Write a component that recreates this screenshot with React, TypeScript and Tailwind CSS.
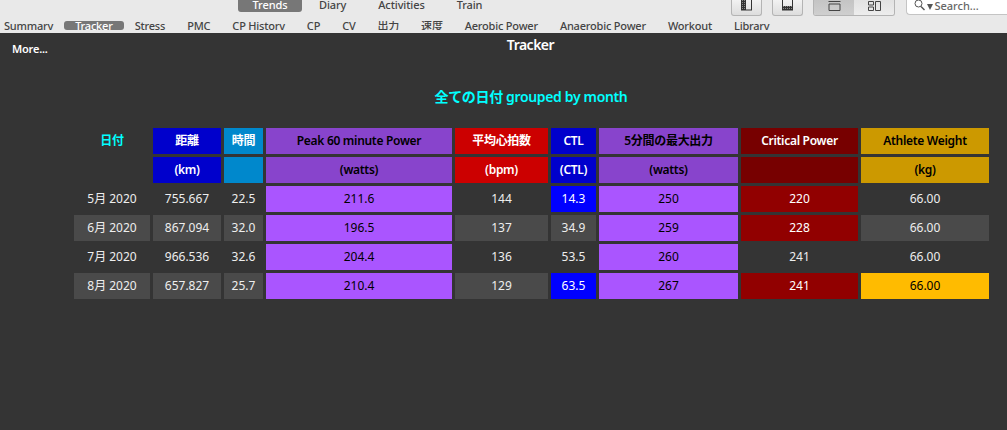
import React from "react";

const sans = "font-['Noto_Sans','Noto_Sans_CJK_JP',sans-serif]";

type Cell = { text: string; cls: string };

const hBlue = "bg-[#0000cc] text-white";
const hTeal = "bg-[#0088cc] text-white";
const hPurple = "bg-[#8844cc] text-black";
const hRed = "bg-[#cc0000] text-white";
const hMaroon = "bg-[#770000] text-white";
const hGold = "bg-[#cc9900] text-black";
const plain = "text-[#eeeeee]";
const grey = "bg-[#4a4a4a] text-[#eeeeee]";
const purple = "bg-[#aa55ff] text-black";
const blue = "bg-[#0000ff] text-white";
const red = "bg-[#910000] text-white";
const gold = "bg-[#ffbb00] text-black";

const head1: Cell[] = [
  { text: "日付", cls: "text-[#00ffff]" },
  { text: "距離", cls: hBlue },
  { text: "時間", cls: hTeal },
  { text: "Peak 60 minute Power", cls: hPurple },
  { text: "平均心拍数", cls: hRed },
  { text: "CTL", cls: hBlue },
  { text: "5分間の最大出力", cls: hPurple },
  { text: "Critical Power", cls: hMaroon },
  { text: "Athlete Weight", cls: hGold },
];

const head2: Cell[] = [
  { text: "", cls: "" },
  { text: "(km)", cls: hBlue },
  { text: "", cls: hTeal },
  { text: "(watts)", cls: hPurple },
  { text: "(bpm)", cls: hRed },
  { text: "(CTL)", cls: hBlue },
  { text: "(watts)", cls: hPurple },
  { text: "", cls: hMaroon },
  { text: "(kg)", cls: hGold },
];

const rows: Cell[][] = [
  [
    { text: "5月 2020", cls: plain },
    { text: "755.667", cls: plain },
    { text: "22.5", cls: plain },
    { text: "211.6", cls: purple },
    { text: "144", cls: plain },
    { text: "14.3", cls: blue },
    { text: "250", cls: purple },
    { text: "220", cls: red },
    { text: "66.00", cls: plain },
  ],
  [
    { text: "6月 2020", cls: grey },
    { text: "867.094", cls: grey },
    { text: "32.0", cls: grey },
    { text: "196.5", cls: purple },
    { text: "137", cls: grey },
    { text: "34.9", cls: grey },
    { text: "259", cls: purple },
    { text: "228", cls: red },
    { text: "66.00", cls: grey },
  ],
  [
    { text: "7月 2020", cls: plain },
    { text: "966.536", cls: plain },
    { text: "32.6", cls: plain },
    { text: "204.4", cls: purple },
    { text: "136", cls: plain },
    { text: "53.5", cls: plain },
    { text: "260", cls: purple },
    { text: "241", cls: plain },
    { text: "66.00", cls: plain },
  ],
  [
    { text: "8月 2020", cls: grey },
    { text: "657.827", cls: grey },
    { text: "25.7", cls: grey },
    { text: "210.4", cls: purple },
    { text: "129", cls: grey },
    { text: "63.5", cls: blue },
    { text: "267", cls: purple },
    { text: "241", cls: red },
    { text: "66.00", cls: gold },
  ],
];

const tabs = ["Summary", "Tracker", "Stress", "PMC", "CP History", "CP", "CV", "出力", "速度", "Aerobic Power", "Anaerobic Power", "Workout", "Library"];

const btn = "h-4 bg-linear-to-b from-[#f2f2f2] to-[#dddddd] border border-t-0 border-[#b4b4b4] rounded-b-[3px] flex justify-center";

function Dither({ x, y, w, h }: { x: number; y: number; w: number; h: number }) {
  return (
    <>
      <rect x={x} y={y} width={w} height={h} fill="#333333" />
      <rect x={x} y={y} width={w} height={h} fill="url(#dots)" />
    </>
  );
}

function TopBar() {
  return (
    <div className="h-[33px] bg-[#e9e9e9] overflow-hidden">
      <div className="h-4 flex items-start">
        <div className="ml-[238px] flex text-[11px] font-medium tracking-[-0.1px] text-[#444444]">
          <span className="w-[64px] h-3 rounded-b-[3px] bg-[#777777] text-white text-center leading-[10px]">Trends</span>
          <span className="ml-[17px] leading-[10px]">Diary</span>
          <span className="ml-8 leading-[10px]">Activities</span>
          <span className="ml-8 leading-[10px]">Train</span>
        </div>
        <div className="ml-[249px] flex">
          <button className={`w-[31px] ${btn}`}>
            <svg width="13" height="11" viewBox="0 0 13 11">
              <defs>
                <pattern id="dots" width="2" height="2" patternUnits="userSpaceOnUse">
                  <rect width="1" height="1" fill="#888888" />
                </pattern>
              </defs>
              <Dither x={1} y={0} w={5} h={10} />
              <rect x="1.5" y="-1" width="10" height="11" fill="none" stroke="#333333" />
            </svg>
          </button>
          <button className={`ml-[10px] w-[31px] ${btn}`}>
            <svg width="13" height="11" viewBox="0 0 13 11">
              <Dither x={1} y={6} w={11} h={4} />
              <rect x="1.5" y="-1" width="10" height="11" fill="none" stroke="#333333" />
            </svg>
          </button>
          <div className="ml-[10px] w-[82px] h-4 flex border border-t-0 border-[#b4b4b4] rounded-b-[3px] overflow-hidden">
            <div className="w-10 bg-linear-to-b from-[#c4c4c4] to-[#cfcfcf] flex justify-center pt-px">
              <svg width="13" height="10" viewBox="0 0 13 10">
                <path d="M0.5 0.5H12.5M1 3H12V9.5H1Z" fill="none" stroke="#444444" />
              </svg>
            </div>
            <div className="flex-1 bg-linear-to-b from-[#e2e2e2] to-[#ededed] flex justify-center pt-px">
              <svg width="13" height="10" viewBox="0 0 13 10">
                <path d="M0.5 0.5H5.5V4H0.5ZM0.5 6H5.5V9.5H0.5ZM7.5 0.5H12.5V9.5H7.5Z" fill="none" stroke="#444444" />
              </svg>
            </div>
          </div>
          <div className="ml-[11px] w-[104px] h-[15px] bg-white border-l border-b border-[#c4c4c4] rounded-bl-[4px] flex items-start pl-[7px] gap-[3px] text-[11px] text-[#666666] leading-[11px]">
            <svg width="11" height="11" viewBox="0 0 11 11" className="shrink-0">
              <circle cx="4.5" cy="3.5" r="3.5" fill="none" stroke="#555555" />
              <path d="M7 6.5L10.5 10" stroke="#555555" strokeWidth="1.4" />
            </svg>
            <svg width="6" height="11" viewBox="0 0 6 11" className="shrink-0 -ml-px">
              <path d="M0 4H6L3 10Z" fill="#555555" />
            </svg>
            <span className="font-medium -ml-[2px]">Search...</span>
          </div>
        </div>
      </div>
      <div className="flex mt-[5px] -ml-[7px] text-[11px] font-medium tracking-[-0.2px] text-[#444444]">
        {tabs.map((t) => (
          <span key={t} className={`h-[9px] px-[11px] leading-[10px] overflow-hidden whitespace-nowrap ${t === "Tracker" ? "bg-[#777777] text-white rounded-[3px]" : ""}`}>
            {t}
          </span>
        ))}
      </div>
    </div>
  );
}

export default function App() {
  return (
    <div className={`w-[1007px] h-[430px] overflow-hidden bg-[#343434] ${sans}`}>
      <TopBar />
      <div className="relative h-[397px]">
        <span className="absolute left-3 top-[8px] text-[11px] leading-4 font-semibold tracking-[-0.2px] text-white">More...</span>
        <h1 className="pt-[2px] ml-[54px] text-center text-[14px] leading-5 font-semibold tracking-[-0.5px] text-white">Tracker</h1>
        <p className="mt-[32px] ml-[55px] text-center text-[14px] leading-5 font-semibold tracking-[-0.35px] text-[#00ffff]">全ての日付 grouped by month</p>
        <div className="mt-[21px] ml-[74px] w-fit grid grid-cols-[76px_68px_39px_186px_93px_45px_139px_117px_128px] auto-rows-[26px] gap-[3px] text-[12px]">
          {head1.concat(head2).map((c, i) => (
            <div key={i} className={`flex items-center justify-center font-semibold tracking-[-0.3px] ${c.cls}`}>{c.text}</div>
          ))}
          {rows.flat().map((c, i) => (
            <div key={i} className={`flex items-center justify-center ${c.cls}`}>{c.text}</div>
          ))}
        </div>
      </div>
    </div>
  );
}
